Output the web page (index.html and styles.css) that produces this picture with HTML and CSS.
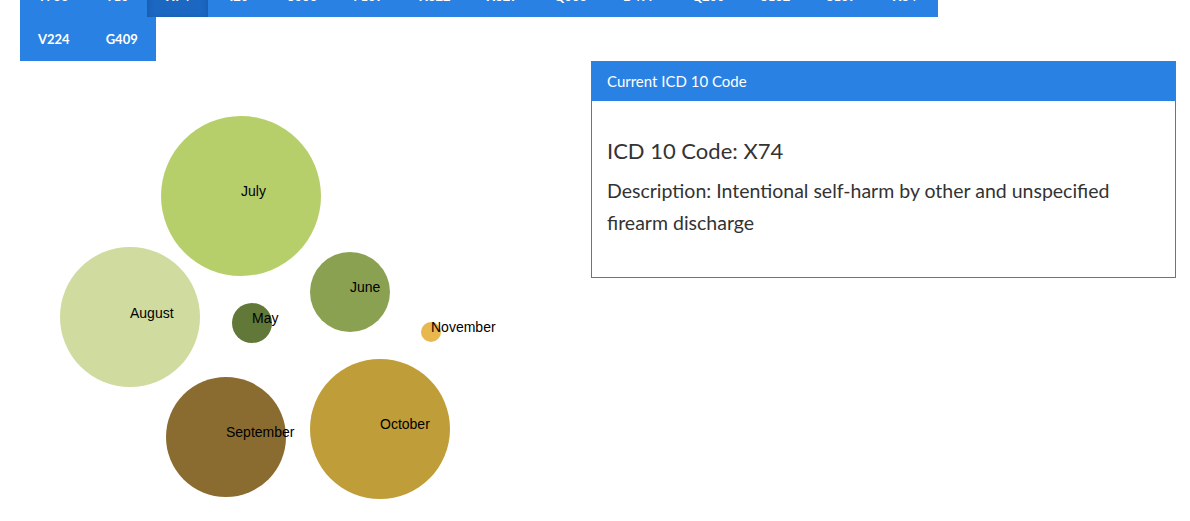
FILE: index.html
```html
<!DOCTYPE html>
<html>
<head>
<meta charset="utf-8">
<link rel="stylesheet" href="styles.css">
</head>
<body>
<div class="page">
  <nav class="codes">
    <div class="code-row code-row-top">
      <a class="tab">T733</a>
      <a class="tab">Y10</a>
      <a class="tab active">X74</a>
      <a class="tab">I20</a>
      <a class="tab">S066</a>
      <a class="tab">F139</a>
      <a class="tab">X822</a>
      <a class="tab">X829</a>
      <a class="tab">Q033</a>
      <a class="tab">D497</a>
      <a class="tab">Q200</a>
      <a class="tab">S132</a>
      <a class="tab">S139</a>
      <a class="tab tab-last">X84</a>
    </div>
    <div class="code-row">
      <a class="tab">V224</a>
      <a class="tab">G409</a>
    </div>
  </nav>
  <div class="main">
    <div class="chart">
      <svg width="571" height="460" viewBox="0 0 571 460" class="bubbles">
        <circle cx="221" cy="135" r="80" fill="#b7cf6b"/>
        <circle cx="110" cy="256" r="70" fill="#d0dba0"/>
        <circle cx="232" cy="262" r="20" fill="#627838"/>
        <circle cx="330" cy="231" r="40" fill="#8ba152"/>
        <circle cx="411" cy="271" r="10" fill="#e8b84f"/>
        <circle cx="206" cy="376" r="60" fill="#8a6c31"/>
        <circle cx="360" cy="368" r="70" fill="#bf9d39"/>
        <text x="221" y="135">July</text>
        <text x="110" y="257">August</text>
        <text x="232" y="262">May</text>
        <text x="330" y="231">June</text>
        <text x="411" y="271">November</text>
        <text x="206" y="376">September</text>
        <text x="360" y="368">October</text>
      </svg>
    </div>
    <section class="panel">
      <div class="panel-head">Current ICD 10 Code</div>
      <div class="panel-body">
        <h3 class="code-title">ICD 10 Code: X74</h3>
        <p class="code-desc">Description: Intentional self-harm by other and unspecified firearm discharge</p>
      </div>
    </section>
  </div>
</div>
</body>
</html>
```

FILE: styles.css
```css
html, body {
  margin: 0;
  padding: 0;
  background: #fff;
}
body {
  font-family: Lato, "Open Sans", sans-serif;
  color: #333;
  overflow: hidden;
}
.page {
  padding-left: 20px;
}
.codes {
  margin-top: -27px;
}
.code-row {
  display: flex;
}
.tab {
  display: block;
  height: 44px;
  line-height: 44px;
  padding: 0 18px;
  background: #2881e3;
  color: #fff;
  font-weight: bold;
  font-size: 13px;
  min-width: 25px;
  text-align: center;
}
.code-row-top .tab {
  line-height: 46px;
}
.code-row-top .tab-last {
  padding-right: 21px;
}
.tab.active {
  background: #1b67c1;
  box-shadow: inset 0 2px 6px rgba(0,0,0,0.15);
}
.main {
  display: grid;
  grid-template-columns: 571px 585px;
  align-items: start;
}
.bubbles {
  display: block;
}
.bubbles text {
  font-family: "Liberation Sans", Arial, sans-serif;
  font-size: 14px;
  fill: #000;
}
.panel {
  border: 1px solid #2a82e4;
  background: #fff;
}
.panel-head {
  background: #2881e3;
  color: #fff;
  height: 39px;
  line-height: 39px;
  padding: 0 15px;
  font-size: 15px;
}
.panel-body {
  padding: 38px 15px 38px;
}
.code-title {
  margin: 0 0 12px;
  font-weight: normal;
  font-size: 22px;
  line-height: 24px;
  color: #333;
}
.code-desc {
  margin: 0;
  font-size: 19.5px;
  line-height: 32px;
  color: #333;
}
```
